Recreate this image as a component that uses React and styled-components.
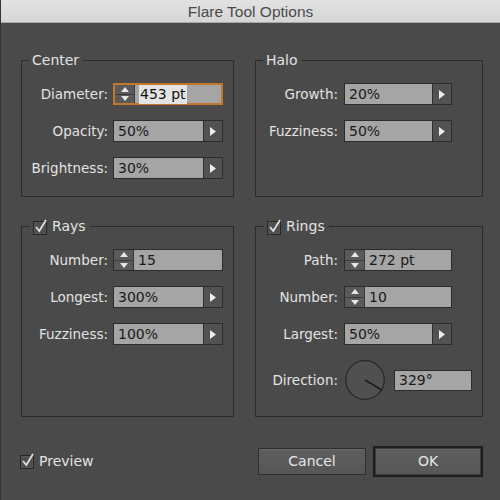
import React from "react";
import styled, { createGlobalStyle, css } from "styled-components";

const Global = createGlobalStyle`
  html, body { margin: 0; padding: 0; background: #4a4a4a; }
  body { font-family: "DejaVu Sans", "Liberation Sans", sans-serif; }
  * { box-sizing: border-box; }
`;

const Window = styled.div`
  width: 500px;
  height: 500px;
  background: #4a4a4a;
  border-left: 1px solid #3a342c;
  display: flex;
  flex-direction: column;
  overflow: hidden;
`;

const TitleBar = styled.div`
  height: 23px;
  background: linear-gradient(#e2e2e2, #d6d6d6);
  border-bottom: 1px solid #a9a9a9;
  display: flex;
  align-items: center;
  justify-content: center;
  font-family: "Liberation Sans", Arial, sans-serif;
  font-size: 15.5px;
  color: #4a4a4a;
  padding-top: 1px;
`;

const Body = styled.div`
  padding: 37px 17px 0 20px;
  display: grid;
  grid-template-columns: 213px 228px;
  grid-template-rows: 137px 191px;
  column-gap: 21px;
  row-gap: 29px;
`;

const Group = styled.div`
  border: 1px solid #2b2b2b;
  display: flex;
  flex-direction: column;
`;

const GroupTitle = styled.div`
  align-self: flex-start;
  margin: -9px 0 0 ${(p) => p.$indent}px;
  padding: 0 4px 0 3px;
  background: #4a4a4a;
  height: 17px;
  line-height: 17px;
  font-size: 14px;
  color: #e2e2e2;
  display: flex;
  align-items: center;
  gap: 3px;
`;

const Rows = styled.div`
  margin-top: 14px;
  display: flex;
  flex-direction: column;
  gap: 15px;
`;

const Row = styled.div`
  display: grid;
  grid-template-columns: ${(p) => p.$labelW}px auto;
  column-gap: ${(p) => p.$gap}px;
  align-items: center;
  justify-content: start;
`;

const Label = styled.span`
  text-align: right;
  font-size: 13.5px;
  color: #e2e2e2;
  white-space: nowrap;
`;

const FieldBox = styled.div`
  width: ${(p) => p.$w}px;
  height: 22px;
  border: 1px solid #2c2c2c;
  display: flex;
  background: #a5a5a5;
  ${(p) =>
    p.$focused &&
    css`
      border: 2px solid #c4772c;
    `}
`;

const Spinner = styled.div`
  width: 20px;
  flex: none;
  background: #5a5a5a;
  border-right: 1px solid #3a3a3a;
  display: flex;
  flex-direction: column;
`;

const SpinHalf = styled.div`
  flex: 1;
  display: flex;
  align-items: center;
  justify-content: center;
  ${(p) => p.$top && css`border-bottom: 1px solid #3c3c3c;`}
`;

const Value = styled.div`
  flex: 1;
  display: flex;
  align-items: center;
  padding-left: 4px;
  font-size: 14px;
  color: #1a1a1a;
  white-space: nowrap;
`;

const Selected = styled.span`
  background: #e4e4e4;
  color: #111;
  padding: 1px 1px;
  line-height: 17px;
`;

const ArrowBtn = styled.div`
  width: 19px;
  flex: none;
  background: #525252;
  border-left: 1px solid #2f2f2f;
  display: flex;
  align-items: center;
  justify-content: center;
`;

const DirectionWrap = styled.div`
  display: flex;
  align-items: center;
  gap: 9px;
  margin-left: 1px;
`;

const DialSvg = styled.svg`
  display: block;
`;

const SmallField = styled.div`
  width: 78px;
  height: 21px;
  background: #a5a5a5;
  border: 1px solid #2c2c2c;
  font-size: 14px;
  color: #1a1a1a;
  display: flex;
  align-items: center;
  padding-left: 4px;
`;

const Footer = styled.div`
  margin-top: 28px;
  padding: 0 17px 0 19px;
  height: 32px;
  display: flex;
  align-items: center;
  justify-content: space-between;
`;

const CheckLabel = styled.label`
  display: flex;
  align-items: center;
  gap: 3px;
  font-size: 14px;
  color: #e2e2e2;
`;

const Buttons = styled.div`
  display: flex;
  align-items: center;
  gap: 7px;
`;

const Button = styled.button`
  font-family: "DejaVu Sans", sans-serif;
  font-size: 14px;
  color: #e6e6e6;
  background: linear-gradient(#5e5e5e, #565656);
  border: 1px solid #2e2e2e;
  box-shadow: inset 0 1px 0 #6a6a6a;
  width: 108px;
  height: 27px;
  padding: 0;
  ${(p) =>
    p.$default &&
    css`
      width: 110px;
      height: 31px;
      border: 2px solid #1e1e1e;
      box-shadow: inset 0 0 0 1px #3c3c3c, inset 0 2px 0 #666;
    `}
`;

const UpTri = () => (
  <svg width="8" height="5" viewBox="0 0 8 5">
    <path d="M4 0 L8 5 L0 5 Z" fill="#e6e6e6" />
  </svg>
);
const DownTri = () => (
  <svg width="8" height="5" viewBox="0 0 8 5">
    <path d="M0 0 L8 0 L4 5 Z" fill="#e6e6e6" />
  </svg>
);
const RightTri = () => (
  <svg width="6" height="9" viewBox="0 0 6 9">
    <path d="M0 0 L6 4.5 L0 9 Z" fill="#ececec" />
  </svg>
);

const CheckBox = () => (
  <svg width="16" height="16" viewBox="0 0 16 16" style={{ display: "block" }}>
    <rect x="0.5" y="2.5" width="13" height="13" fill="#4e4e4e" stroke="#262626" />
    <rect x="1.5" y="3.5" width="11" height="11" fill="none" stroke="#575757" />
    <path d="M3 8 L6.3 12 L13 1" fill="none" stroke="#e0e0e0" strokeWidth="1.8" />
  </svg>
);

function SpinField({ w, value, focused }) {
  return (
    <FieldBox $w={w} $focused={focused}>
      <Spinner>
        <SpinHalf $top>
          <UpTri />
        </SpinHalf>
        <SpinHalf>
          <DownTri />
        </SpinHalf>
      </Spinner>
      <Value>{focused ? <Selected>{value}</Selected> : value}</Value>
    </FieldBox>
  );
}

function DropField({ w, value }) {
  return (
    <FieldBox $w={w}>
      <Value>{value}</Value>
      <ArrowBtn>
        <RightTri />
      </ArrowBtn>
    </FieldBox>
  );
}

function Dial({ angle }) {
  const r = 19.5;
  const c = 20;
  const rad = (angle * Math.PI) / 180;
  const x2 = c + Math.cos(rad) * r;
  const y2 = c - Math.sin(rad) * r;
  return (
    <DialSvg width="40" height="40" viewBox="0 0 40 40">
      <circle cx={c} cy={c} r="19.3" fill="#505050" stroke="#262626" strokeWidth="1.2" />
      <line x1={c} y1={c} x2={x2} y2={y2} stroke="#1c1c1c" strokeWidth="1.6" />
    </DialSvg>
  );
}

const L = { labelW: 86, gap: 5, w: 110 };
const R = { labelW: 82, gap: 6, w: 108 };

export default function App() {
  return (
    <Window>
      <Global />
      <TitleBar>Flare Tool Options</TitleBar>
      <Body>
        <Group>
          <GroupTitle $indent={7}>Center</GroupTitle>
          <Rows>
            <Row $labelW={L.labelW} $gap={L.gap}>
              <Label>Diameter:</Label>
              <SpinField w={L.w} value="453 pt" focused />
            </Row>
            <Row $labelW={L.labelW} $gap={L.gap}>
              <Label>Opacity:</Label>
              <DropField w={L.w} value="50%" />
            </Row>
            <Row $labelW={L.labelW} $gap={L.gap}>
              <Label>Brightness:</Label>
              <DropField w={L.w} value="30%" />
            </Row>
          </Rows>
        </Group>
        <Group>
          <GroupTitle $indent={7}>Halo</GroupTitle>
          <Rows>
            <Row $labelW={R.labelW} $gap={R.gap}>
              <Label>Growth:</Label>
              <DropField w={R.w} value="20%" />
            </Row>
            <Row $labelW={R.labelW} $gap={R.gap}>
              <Label>Fuzziness:</Label>
              <DropField w={R.w} value="50%" />
            </Row>
          </Rows>
        </Group>
        <Group>
          <GroupTitle $indent={8}>
            <CheckBox />
            Rays
          </GroupTitle>
          <Rows>
            <Row $labelW={L.labelW} $gap={L.gap}>
              <Label>Number:</Label>
              <SpinField w={L.w} value="15" />
            </Row>
            <Row $labelW={L.labelW} $gap={L.gap}>
              <Label>Longest:</Label>
              <DropField w={L.w} value="300%" />
            </Row>
            <Row $labelW={L.labelW} $gap={L.gap}>
              <Label>Fuzziness:</Label>
              <DropField w={L.w} value="100%" />
            </Row>
          </Rows>
        </Group>
        <Group>
          <GroupTitle $indent={8}>
            <CheckBox />
            Rings
          </GroupTitle>
          <Rows>
            <Row $labelW={R.labelW} $gap={R.gap}>
              <Label>Path:</Label>
              <SpinField w={R.w} value="272 pt" />
            </Row>
            <Row $labelW={R.labelW} $gap={R.gap}>
              <Label>Number:</Label>
              <SpinField w={R.w} value="10" />
            </Row>
            <Row $labelW={R.labelW} $gap={R.gap}>
              <Label>Largest:</Label>
              <DropField w={R.w} value="50%" />
            </Row>
            <Row $labelW={R.labelW} $gap={R.gap}>
              <Label>Direction:</Label>
              <DirectionWrap>
                <Dial angle={329} />
                <SmallField>329°</SmallField>
              </DirectionWrap>
            </Row>
          </Rows>
        </Group>
      </Body>
      <Footer>
        <CheckLabel>
          <CheckBox />
          Preview
        </CheckLabel>
        <Buttons>
          <Button>Cancel</Button>
          <Button $default>OK</Button>
        </Buttons>
      </Footer>
    </Window>
  );
}
